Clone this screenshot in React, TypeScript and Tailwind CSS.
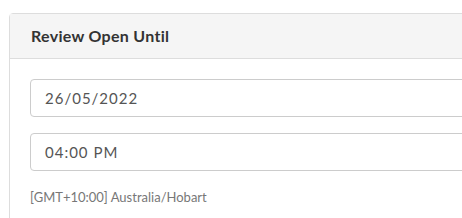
import React from 'react';

const font = { fontFamily: 'Lato, "Open Sans", sans-serif' };

function Field({ value }: { value: string }) {
  return (
    <div className="flex h-[38px] items-center rounded-[4px] border border-[#ccc] bg-white px-[14px] text-[15px] tracking-[1px] text-[#555]">
      {value}
    </div>
  );
}

export default function App() {
  return (
    <div className="h-[218px] w-[462px] overflow-hidden bg-white" style={font}>
      <div className="ml-[9px] mt-[13px] w-[500px] rounded-[4px] border border-[#ddd] bg-white">
        {/* header */}
        <div className="flex h-[45px] items-center border-b border-[#ddd] bg-[#f5f5f5] px-[21px]">
          <h3 className="text-[16px] font-bold tracking-[0.3px] text-[#333]">Review Open Until</h3>
        </div>

        {/* body */}
        <div className="flex flex-col gap-4 px-[20px] pt-[20px] pb-6">
          <Field value="26/05/2022" />
          <Field value="04:00 PM" />
          <p className="mt-[1px] text-[13px] text-[#777]">[GMT+10:00] Australia/Hobart</p>
        </div>
      </div>
    </div>
  );
}
